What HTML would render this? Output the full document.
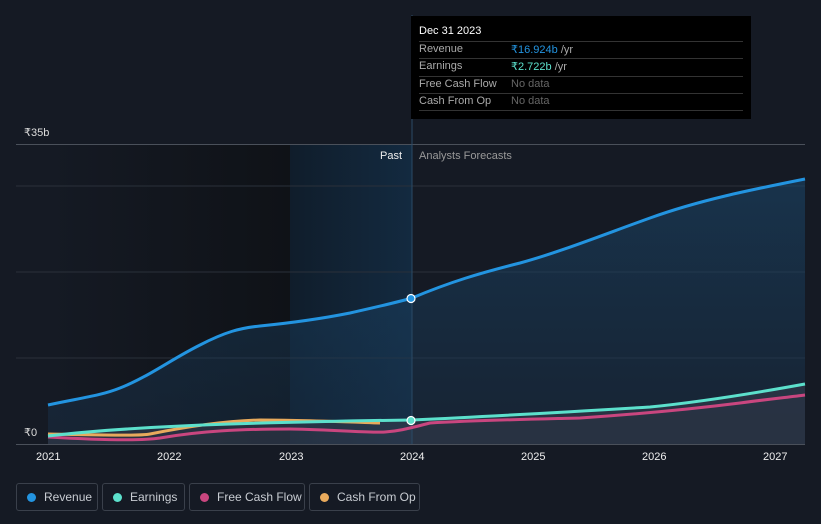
<!DOCTYPE html>
<html><head><style>
body{margin:0;width:821px;height:524px;background:#151a24;font-family:"Liberation Sans",sans-serif;overflow:hidden;position:relative}
.t{position:absolute;font-size:11px}
.leg{position:absolute;top:483px;height:28px;border:1px solid #3a404b;border-radius:3px;box-sizing:border-box;color:#c8ccd2;font-size:12px;line-height:26px;padding-left:27px}
.leg i{position:absolute;left:10px;top:9px;width:9px;height:9px;border-radius:50%}
</style></head><body>
<svg width="821" height="524" style="position:absolute;left:0;top:0">
<defs>
<linearGradient id="pg" x1="0" x2="1"><stop offset="0" stop-color="#151a24"/><stop offset="1" stop-color="#0f1217"/></linearGradient>
<linearGradient id="bg" x1="0" x2="1"><stop offset="0" stop-color="#101d2b"/><stop offset="1" stop-color="#132a40"/></linearGradient>
<linearGradient id="rf" x1="0" y1="0" x2="0" y2="1"><stop offset="0" stop-color="#1a4a70" stop-opacity=".75"/><stop offset="1" stop-color="#1a3550" stop-opacity=".5"/></linearGradient>
</defs>
<rect x="48" y="144" width="242" height="300" fill="url(#pg)"/>
<rect x="290" y="144" width="122" height="300" fill="url(#bg)"/>
<g stroke="#2a303a" stroke-width="1"><line x1="16" y1="186" x2="805" y2="186"/><line x1="16" y1="272" x2="805" y2="272"/><line x1="16" y1="358" x2="805" y2="358"/></g>
<line x1="16" y1="144.5" x2="805" y2="144.5" stroke="#4a505a"/>
<path d="M48,405 C80,398 100,396 120,388 C150,376 170,360 200,345 C225,332 240,328 260,326 C290,323 320,319 350,313 C380,306 395,303 412,298 C450,282 480,273 520,263 C560,252 600,236 650,218 C700,200 750,190 805,179 L805,444 L48,444Z" fill="url(#rf)" opacity=".7"/>
<path d="M48,436 C100,430 170,426 230,424 C330,421 412,420 412,420 C500,416 600,410 650,407 C700,402 750,394 805,384 L805,444 L48,444Z" fill="#3a4050" opacity=".5"/>
<line x1="412" y1="15" x2="412" y2="444" stroke="#2a4a66" stroke-width="1"/>
<line x1="16" y1="444.5" x2="805" y2="444.5" stroke="#4a505a"/>
<path d="M48,405 C80,398 100,396 120,388 C150,376 170,360 200,345 C225,332 240,328 260,326 C290,323 320,319 350,313 C380,306 395,303 412,298 C450,282 480,273 520,263 C560,252 600,236 650,218 C700,200 750,190 805,179" fill="none" stroke="#2394e0" stroke-width="3"/>
<path d="M48,434 C100,435 140,436 150,434 C180,428 220,421 260,420 C300,420 350,422 380,423" fill="none" stroke="#e8aa5c" stroke-width="3"/>
<path d="M48,437 C100,440 140,441 160,438 C200,431 240,429 290,429 C340,430 370,433 385,432 C400,431 410,428 430,423 C480,420 540,419 580,418 C640,414 700,408 740,403 C770,399 790,397 805,395" fill="none" stroke="#c9467f" stroke-width="3"/>
<path d="M48,436 C100,430 170,426 230,424 C330,421 412,420 412,420 C500,416 600,410 650,407 C700,402 750,394 805,384" fill="none" stroke="#5ce0cc" stroke-width="3"/>
<circle cx="411" cy="298.5" r="4" fill="#2394e0" stroke="#fff" stroke-width="1.2"/>
<circle cx="411" cy="420.5" r="4" fill="#5ce0cc" stroke="#fff" stroke-width="1.2"/>
</svg>
<div style="position:absolute;left:411px;top:16px;width:340px;height:103px;background:#000"></div>
<div class="t" style="left:419px;top:25px;color:#fff">Dec 31 2023</div>
<div style="position:absolute;left:419px;top:41px;width:324px;border-top:1px solid #333"></div>
<div style="position:absolute;left:419px;top:58px;width:324px;border-top:1px solid #333"></div>
<div style="position:absolute;left:419px;top:76px;width:324px;border-top:1px solid #333"></div>
<div style="position:absolute;left:419px;top:93px;width:324px;border-top:1px solid #333"></div>
<div style="position:absolute;left:419px;top:110px;width:324px;border-top:1px solid #333"></div>
<div class="t" style="left:419px;top:43px;color:#aaa">Revenue</div><div class="t" style="left:511px;top:43px;color:#2394e0">₹16.924b <span style="color:#aaa">/yr</span></div>
<div class="t" style="left:419px;top:60px;color:#aaa">Earnings</div><div class="t" style="left:511px;top:60px;color:#5ce0cc">₹2.722b <span style="color:#aaa">/yr</span></div>
<div class="t" style="left:419px;top:78px;color:#aaa">Free Cash Flow</div><div class="t" style="left:511px;top:78px;color:#666">No data</div>
<div class="t" style="left:419px;top:95px;color:#aaa">Cash From Op</div><div class="t" style="left:511px;top:95px;color:#666">No data</div>
<div class="t" style="left:24px;top:126px;color:#ddd">₹35b</div>
<div class="t" style="left:24px;top:426px;color:#ddd">₹0</div>
<div class="t" style="left:380px;top:150px;color:#eee">Past</div>
<div class="t" style="left:419px;top:150px;color:#999">Analysts Forecasts</div>
<div class="t" style="left:36px;top:451px;color:#eee">2021</div>
<div class="t" style="left:157px;top:451px;color:#eee">2022</div>
<div class="t" style="left:279px;top:451px;color:#eee">2023</div>
<div class="t" style="left:400px;top:451px;color:#eee">2024</div>
<div class="t" style="left:521px;top:451px;color:#eee">2025</div>
<div class="t" style="left:642px;top:451px;color:#eee">2026</div>
<div class="t" style="left:763px;top:451px;color:#eee">2027</div>
<div class="leg" style="left:16px;width:82px"><i style="background:#2394e0"></i>Revenue</div>
<div class="leg" style="left:102px;width:83px"><i style="background:#5ce0cc"></i>Earnings</div>
<div class="leg" style="left:189px;width:116px"><i style="background:#c9467f"></i>Free Cash Flow</div>
<div class="leg" style="left:309px;width:111px"><i style="background:#e8aa5c"></i>Cash From Op</div>
</body></html>
